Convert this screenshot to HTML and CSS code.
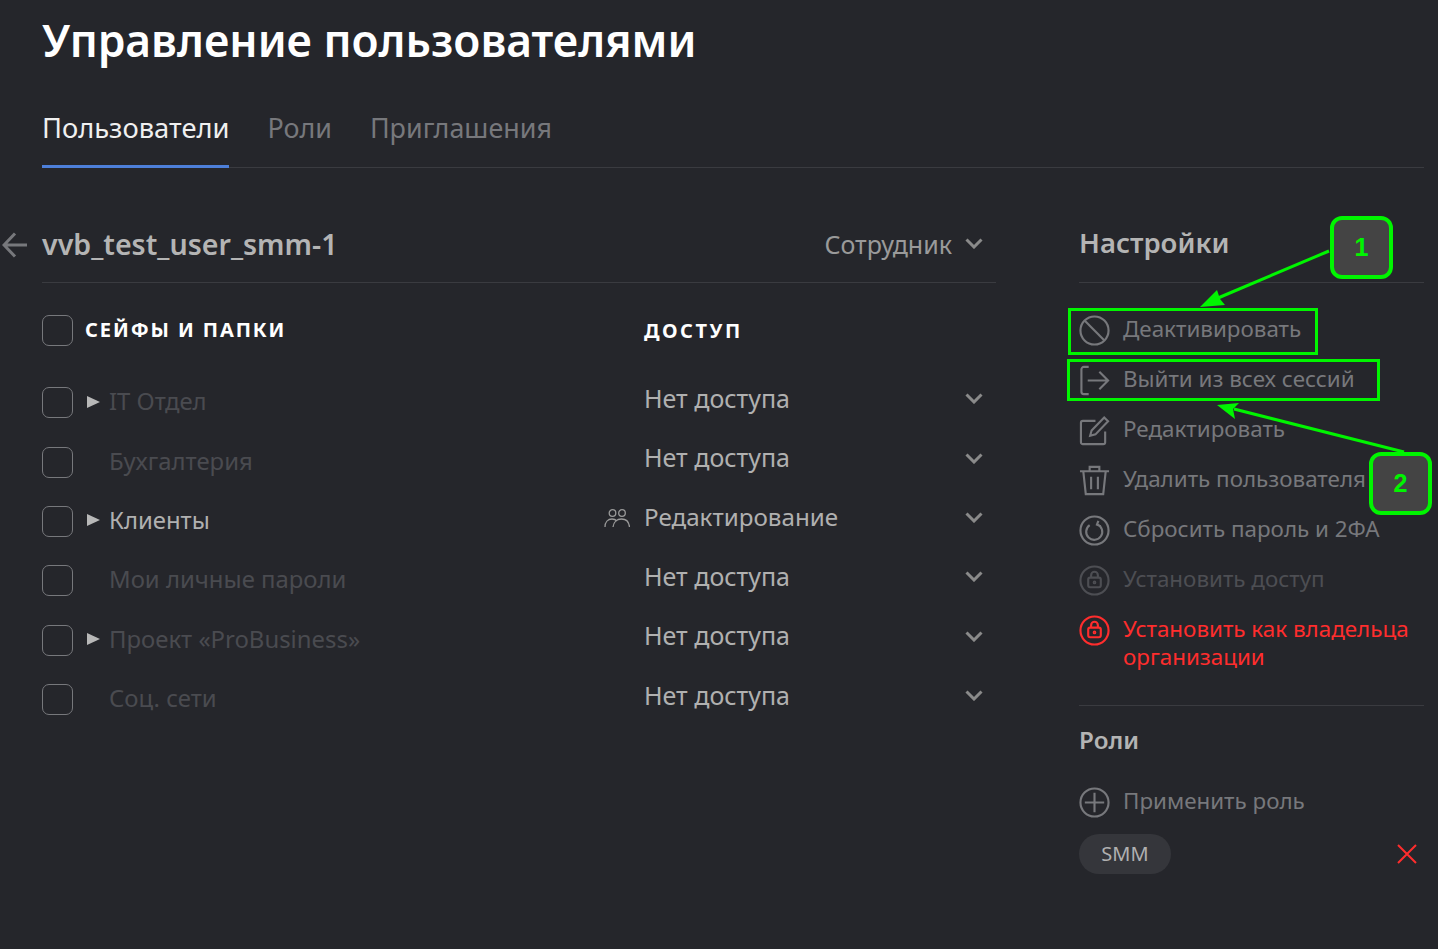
FILE: index.html
```html
<!DOCTYPE html>
<html lang="ru">

<head>
    <meta charset="UTF-8">
    <title>Управление пользователями</title>
    <link rel="stylesheet" href="styles.css">
</head>

<body>
    <h1 class="title">Управление пользователями</h1>

    <nav class="tabs">
        <a class="tab active">Пользователи</a>
        <a class="tab">Роли</a>
        <a class="tab">Приглашения</a>
    </nav>

    <div class="content">
        <section class="user-panel">
            <div class="user-head">
                <svg class="back" width="26" height="26" viewBox="0 0 26 26"><path d="M25 13H2M13 1.5 2 13l11 11.5"/></svg>
                <h2 class="user-name">vvb_test_user_smm-1</h2>
                <span class="user-type">Сотрудник</span>
                <svg class="chev" width="18" height="11" viewBox="0 0 18 11"><path d="M1.5 1.5 9 9l7.5-7.5"/></svg>
            </div>

            <div class="table-head">
                <span class="box"></span>
                <span class="col-name">СЕЙФЫ И ПАПКИ</span>
                <span class="col-access">ДОСТУП</span>
            </div>

            <div class="row">
                <span class="box"></span><span class="arrow"></span>
                <span class="name dim">IT Отдел</span>
                <span class="access">Нет доступа</span>
                <svg class="chev" width="18" height="11" viewBox="0 0 18 11"><path d="M1.5 1.5 9 9l7.5-7.5"/></svg>
            </div>
            <div class="row">
                <span class="box"></span><span class="no-arrow"></span>
                <span class="name dim">Бухгалтерия</span>
                <span class="access">Нет доступа</span>
                <svg class="chev" width="18" height="11" viewBox="0 0 18 11"><path d="M1.5 1.5 9 9l7.5-7.5"/></svg>
            </div>
            <div class="row">
                <span class="box"></span><span class="arrow"></span>
                <span class="name">Клиенты</span>
                <svg class="people" width="26" height="20" viewBox="0 0 26 20"><circle cx="8.5" cy="5" r="3.3"/><circle cx="18" cy="5" r="3.3"/><path d="M1 19c0-5 3-8 7-8 2.5 0 4 1 5 2M9 19c.5-5 4-8 8.5-8 4.5 0 7.500 3 8 8"/></svg>
                <span class="access access-long">Редактирование</span>
                <svg class="chev" width="18" height="11" viewBox="0 0 18 11"><path d="M1.5 1.5 9 9l7.5-7.5"/></svg>
            </div>
            <div class="row">
                <span class="box"></span><span class="no-arrow"></span>
                <span class="name dim">Мои личные пароли</span>
                <span class="access">Нет доступа</span>
                <svg class="chev" width="18" height="11" viewBox="0 0 18 11"><path d="M1.5 1.5 9 9l7.5-7.5"/></svg>
            </div>
            <div class="row">
                <span class="box"></span><span class="arrow"></span>
                <span class="name dim">Проект «ProBusiness»</span>
                <span class="access">Нет доступа</span>
                <svg class="chev" width="18" height="11" viewBox="0 0 18 11"><path d="M1.5 1.5 9 9l7.5-7.5"/></svg>
            </div>
            <div class="row">
                <span class="box"></span><span class="no-arrow"></span>
                <span class="name dim">Соц. сети</span>
                <span class="access">Нет доступа</span>
                <svg class="chev" width="18" height="11" viewBox="0 0 18 11"><path d="M1.5 1.5 9 9l7.5-7.5"/></svg>
            </div>
        </section>

        <aside class="settings">
            <h3 class="side-title side-head">Настройки</h3>

            <ul class="actions">
                <li class="action">
                    <svg class="ico" viewBox="0 0 32 32"><circle cx="16" cy="16" r="14.5"/><path d="M6 6l20 20"/></svg>
                    <span>Деактивировать</span>
                </li>
                <li class="action">
                    <svg class="ico" viewBox="0 0 32 32"><path d="M10 2H5a2.5 2.5 0 0 0-2.500 2.500v23A2.500 2.500 0 0 0 5 30h5M9 16h21M21 7l9 9-9 9"/></svg>
                    <span>Выйти из всех сессий</span>
                </li>
                <li class="action">
                    <svg class="ico" viewBox="0 0 32 32"><path d="M27 17v11a2 2 0 0 1-2 2H4a2 2 0 0 1-2-2V8a2 2 0 0 1 2-2h13"/><path d="M13 16 26 2.500l4 4L17 20l-5.500 1.500z"/></svg>
                    <span>Редактировать</span>
                </li>
                <li class="action">
                    <svg class="ico" viewBox="0 0 32 32"><path d="M1 6.500h30M11 6V2h10v4M4.500 7l2.500 23h18l2.500-23M12.500 12v13M19.500 12v13"/></svg>
                    <span>Удалить пользователя</span>
                </li>
                <li class="action">
                    <svg class="ico" viewBox="0 0 32 32"><circle cx="16" cy="16" r="14.5"/><path d="M11 10.500a8.300 8.300 0 1 0 8-.8M20 6l-1.500 4 4 1.500"/></svg>
                    <span>Сбросить пароль и 2ФА</span>
                </li>
                <li class="action faded">
                    <svg class="ico" viewBox="0 0 32 32"><circle cx="16" cy="16" r="14.5"/><rect x="9.5" y="13" width="13" height="10" rx="2"/><path d="M12.5 13v-2.5a3.5 3.5 0 0 1 7 0V13"/><circle cx="16" cy="18" r=".8"/></svg>
                    <span>Установить доступ</span>
                </li>
                <li class="action danger">
                    <svg class="ico" viewBox="0 0 32 32"><circle cx="16" cy="16" r="14.5"/><rect x="9.5" y="13" width="13" height="10" rx="2"/><path d="M12.5 13v-2.5a3.5 3.5 0 0 1 7 0V13"/><circle cx="16" cy="18" r=".8"/></svg>
                    <span>Установить как владельца организации</span>
                </li>
            </ul>

            <h3 class="side-title roles-title">Роли</h3>

            <div class="action apply">
                <svg class="ico" viewBox="0 0 32 32"><circle cx="16" cy="16" r="14.5"/><path d="M16 6v20M6 16h20"/></svg>
                <span>Применить роль</span>
            </div>

            <div class="role-row">
                <span class="pill">SMM</span>
                <svg class="remove" width="22" height="22" viewBox="0 0 22 22"><path d="M2 2l18 18M20 2 2 20"/></svg>
            </div>
        </aside>
    </div>

    <!-- annotations drawn over the screenshot -->
    <svg class="marks" width="1438" height="949" viewBox="0 0 1438 949">
        <rect x="1069.5" y="309.5" width="247" height="44"/>
        <rect x="1068.5" y="360.5" width="310" height="39"/>
        <path d="M1329 251 1218 298"/>
        <path class="tip" d="M1200 307 1217 290 1220 299 1225 305z"/>
        <path d="M1404 452 1234 409"/>
        <path class="tip" d="M1217 405 1239 403 1233 409 1235 419z"/>
    </svg>
    <span class="badge badge-one">1</span>
    <span class="badge badge-two">2</span>
</body>

</html>
```

FILE: styles.css
```css
* {
    box-sizing: border-box;
}

body {
    margin: 0;
    height: 949px;
    overflow: hidden;
    padding: 0 14px 0 42px;
    position: relative;
    background-color: #25262b;
    color: #b8b8b8;
    font-family: "Noto Sans", sans-serif;
}

.title {
    margin: 0;
    padding-top: 10px;
    height: 98px;
    font-size: 44.3px;
    line-height: 60px;
    font-weight: 600;
    color: #fff;
}

.tabs {
    display: flex;
    gap: 38px;
    height: 70px;
    border-bottom: 1px solid #3a3b40;
}

.tab {
    height: 70px;
    padding-top: 10px;
    font-size: 26.9px;
    line-height: 40px;
    color: #77787c;
}

.tab.active {
    font-size: 27.3px;
    color: #f0f0f0;
    border-bottom: 3px solid #4d7fd9;
}

.content {
    display: flex;
    gap: 83px;
}

.user-panel {
    width: 954px;
}

.user-head {
    display: flex;
    align-items: center;
    height: 115px;
    padding: 37px 13px 0 0;
    position: relative;
    border-bottom: 1px solid #3a3b40;
}

.back {
    position: absolute;
    left: -40px;
    top: 64px;
    fill: none;
    stroke: #77787c;
    stroke-width: 3;
}

.user-name {
    flex: 1;
    margin: 0;
    font-size: 28.6px;
    font-weight: 600;
    color: #b4b4b4;
}

.user-type {
    font-size: 25px;
    color: #9a9a9a;
    margin-right: 13px;
}

.chev {
    fill: none;
    stroke: #8a8a8a;
    stroke-width: 3;
    flex: none;
}

.table-head {
    display: flex;
    align-items: center;
    height: 31px;
    margin-top: 32px;
    margin-bottom: 27px;
}

.col-name {
    width: 571px;
    padding-left: 12px;
    padding-bottom: 2px;
    font-size: 20px;
    font-weight: 700;
    letter-spacing: 1.9px;
    color: #fff;
}

.col-access {
    font-size: 20px;
    font-weight: 700;
    letter-spacing: 2.5px;
    color: #fff;
}

.box {
    width: 31px;
    height: 31px;
    flex: none;
    border: 1px solid #77787c;
    border-radius: 7px;
}

.row {
    display: flex;
    align-items: center;
    height: 59.4px;
    padding-right: 13px;
}

.row .chev {
    margin-bottom: 8px;
}

.arrow {
    width: 0;
    height: 0;
    margin-left: 14px;
    margin-right: 9px;
    margin-bottom: 2px;
    flex: none;
    border-left: 13px solid #b8b8b8;
    border-top: 6.5px solid transparent;
    border-bottom: 6.5px solid transparent;
}

.no-arrow {
    width: 36px;
    flex: none;
}

.name {
    flex: 1;
    padding-bottom: 4px;
    font-size: 23.9px;
    color: #b0b0b0;
}

.name.dim {
    color: #4a4b50;
}

.access {
    width: 321px;
    padding-bottom: 10px;
    font-size: 25px;
    color: #b0b0b0;
}

.access-long {
    font-size: 24.2px;
}

.people {
    margin-right: 14px;
    margin-bottom: 6px;
    fill: none;
    stroke: #9a9a9a;
    stroke-width: 1.3;
}

.settings {
    width: 345px;
}

.side-title {
    margin: 0;
    font-size: 27.5px;
    font-weight: 600;
    color: #b4b4b4;
}

.side-head {
    height: 115px;
    padding-top: 55px;
    line-height: 40px;
    border-bottom: 1px solid #3a3b40;
}

.actions {
    list-style: none;
    margin: 0;
    padding: 32px 0 0;
}

.action {
    display: flex;
    gap: 13px;
    min-height: 50px;
    font-size: 22.4px;
    line-height: 28px;
    color: #77787c;
}

.ico {
    width: 31px;
    height: 31px;
    flex: none;
    fill: none;
    stroke: currentColor;
    stroke-width: 2.2;
}

.action.faded {
    color: #4d4e53;
}

.action.danger {
    color: #ff2d2d;
}

.roles-title {
    margin-top: 34px;
    padding-top: 14px;
    height: 64px;
    font-size: 24.2px;
    line-height: 40px;
    border-top: 1px solid #3a3b40;
}

.apply {
    margin-top: 18px;
    min-height: 47px;
}

.role-row {
    display: flex;
    justify-content: space-between;
    align-items: center;
    padding-right: 6px;
}

.pill {
    width: 92px;
    height: 40px;
    border-radius: 20px;
    background-color: #35363b;
    font-size: 20px;
    line-height: 40px;
    text-align: center;
    color: #b0b0b0;
}

.remove {
    fill: none;
    stroke: #ff2d2d;
    stroke-width: 2;
}

.marks {
    position: absolute;
    left: 0;
    top: 0;
    fill: none;
    stroke: #00f500;
    stroke-width: 3;
}

.marks .tip {
    fill: #00f500;
    stroke: none;
}

.badge {
    position: absolute;
    width: 63px;
    height: 63px;
    border: 4px solid #00f500;
    border-radius: 12px;
    background-color: #444;
    color: #00f500;
    font-family: "Liberation Sans", sans-serif;
    font-size: 25px;
    font-weight: 700;
    line-height: 55px;
    text-align: center;
}

.badge-one {
    left: 1330px;
    top: 216px;
}

.badge-two {
    left: 1369px;
    top: 452px;
}
```
